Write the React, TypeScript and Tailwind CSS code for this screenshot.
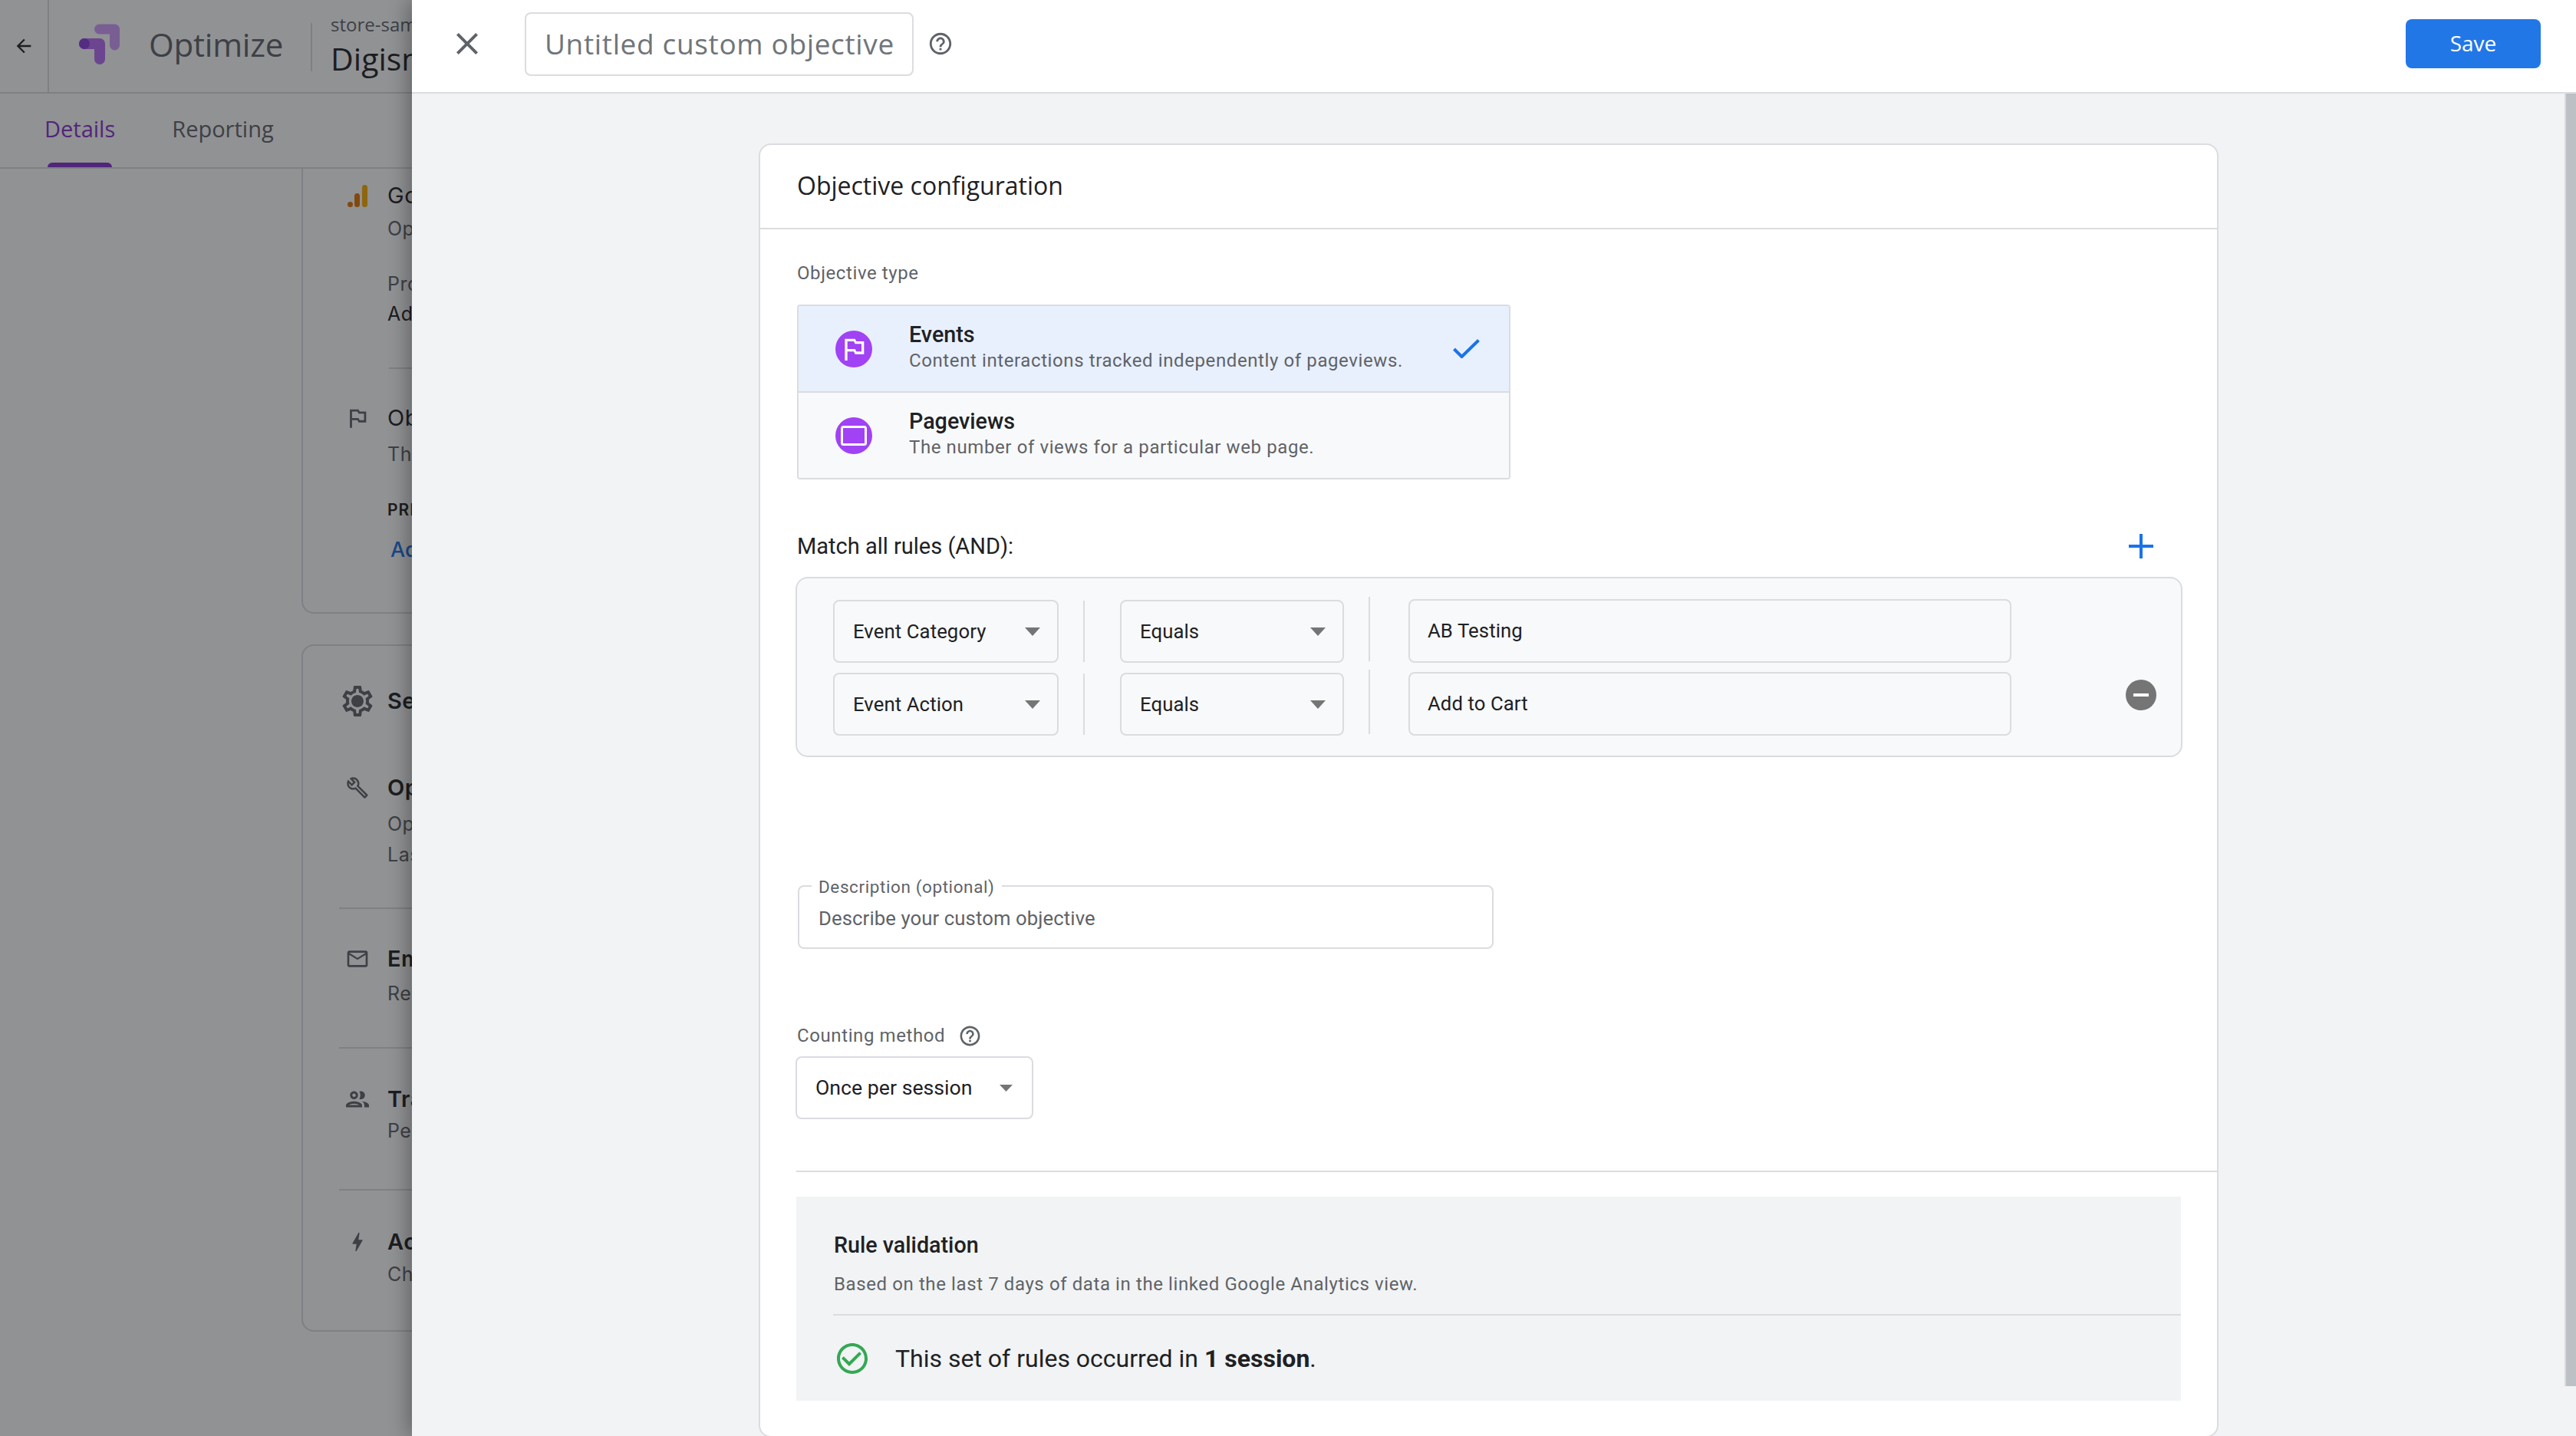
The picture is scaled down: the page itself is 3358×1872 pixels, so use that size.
import type { ReactNode } from "react";

const HEAD = "font-['Open_Sans',sans-serif]";

function Icon({ d, size, className }: { d: string; size: number; className?: string }) {
  return (
    <svg viewBox="0 0 24 24" width={size} height={size} className={`shrink-0 ${className ?? ""}`} fill="currentColor">
      <path d={d} />
    </svg>
  );
}

const HELP =
  "M11 18h2v-2h-2v2zm1-16C6.48 2 2 6.48 2 12s4.48 10 10 10 10-4.48 10-10S17.52 2 12 2zm0 18c-4.41 0-8-3.59-8-8s3.59-8 8-8 8 3.59 8 8-3.59 8-8 8zm0-14c-2.21 0-4 1.79-4 4h2c0-1.1.9-2 2-2s2 .9 2 2c0 2-3 1.75-3 5h2c0-2.25 3-2.5 3-5 0-2.21-1.79-4-4-4z";
const FLAG = "M14 6l-1-2H5v17h2v-7h5l1 2h7V6h-6zm4 8h-4l-1-2H7V6h5l1 2h5v6z";
const CLOSE =
  "M19 6.41L17.59 5 12 10.59 6.41 5 5 6.41 10.59 12 5 17.59 6.41 19 12 13.41 17.59 19 19 17.59 13.41 12z";
const CHECK_CIRCLE =
  "M16.59 7.58L10 14.17l-3.59-3.58L5 12l5 5 8-8zM12 2C6.48 2 2 6.48 2 12s4.48 10 10 10 10-4.48 10-10S17.52 2 12 2zm0 18c-4.42 0-8-3.58-8-8s3.58-8 8-8 8 3.58 8 8-3.58 8-8 8z";
const GEAR =
  "M19.43 12.98c.04-.32.07-.64.07-.98 0-.34-.03-.66-.07-.98l2.11-1.65c.19-.15.24-.42.12-.64l-2-3.46c-.09-.16-.26-.25-.44-.25-.06 0-.12.01-.17.03l-2.49 1c-.52-.4-1.08-.73-1.69-.98l-.38-2.65C14.46 2.18 14.25 2 14 2h-4c-.25 0-.46.18-.49.42l-.38 2.65c-.61.25-1.17.59-1.69.98l-2.49-1c-.06-.02-.12-.03-.18-.03-.17 0-.34.09-.43.25l-2 3.46c-.13.22-.07.49.12.64l2.11 1.65c-.04.32-.07.65-.07.98 0 .33.03.66.07.98l-2.11 1.65c-.19.15-.24.42-.12.64l2 3.46c.09.16.26.25.44.25.06 0 .12-.01.17-.03l2.49-1c.52.4 1.08.73 1.69.98l.38 2.65c.03.24.24.42.49.42h4c.25 0 .46-.18.49-.42l.38-2.65c.61-.25 1.17-.59 1.69-.98l2.49 1c.06.02.12.03.18.03.17 0 .34-.09.43-.25l2-3.46c.12-.22.07-.49-.12-.64l-2.11-1.65zm-1.98-1.71c.04.31.05.52.05.73 0 .21-.02.43-.05.73l-.14 1.13.89.7 1.08.84-.7 1.21-1.27-.51-1.04-.42-.9.68c-.43.32-.84.56-1.25.73l-1.06.43-.16 1.13-.2 1.35h-1.4l-.19-1.35-.16-1.13-1.06-.43c-.43-.18-.83-.41-1.23-.71l-.91-.7-1.06.43-1.27.51-.7-1.21 1.08-.84.89-.7-.14-1.13c-.03-.31-.05-.54-.05-.74s.02-.43.05-.73l.14-1.13-.89-.7-1.08-.84.7-1.21 1.27.51 1.04.42.9-.68c.43-.32.84-.56 1.25-.73l1.06-.43.16-1.13.2-1.35h1.39l.19 1.35.16 1.13 1.06.43c.43.18.83.41 1.23.71l.91.7 1.06-.43 1.27-.51.7 1.21-1.07.85-.89.7.14 1.13zM12 8c-2.21 0-4 1.79-4 4s1.79 4 4 4 4-1.79 4-4-1.79-4-4-4z";
const WRENCH =
  "M22.61 18.99l-9.08-9.08c.93-2.34.45-5.1-1.44-7C9.79.61 6.21.4 3.66 2.26L7.5 6.11 6.08 7.52 2.25 3.69C.39 6.23.6 9.82 2.9 12.11c1.86 1.86 4.57 2.35 6.88 1.48l9.11 9.11c.39.39 1.02.39 1.41 0l2.3-2.3c.4-.38.4-1.01.01-1.41zm-3 1.6l-9.46-9.46c-.61.45-1.29.72-2 .82-1.36.2-2.79-.21-3.83-1.25C3.37 9.76 2.93 8.5 3 7.26l3.09 3.09 4.24-4.24-3.09-3.09c1.24-.07 2.49.37 3.44 1.31 1.08 1.08 1.49 2.57 1.24 3.96-.12.71-.42 1.37-.88 1.96l9.45 9.45-.88.88z";
const MAIL =
  "M20 4H4c-1.1 0-1.99.9-1.99 2L2 18c0 1.1.9 2 2 2h16c1.1 0 2-.9 2-2V6c0-1.1-.9-2-2-2zm0 14H4V8l8 5 8-5v10zm-8-7L4 6h16l-8 5z";
const GROUP =
  "M9 13.75c-2.34 0-7 1.17-7 3.5V19h14v-1.75c0-2.33-4.66-3.5-7-3.5zM4.34 17c.84-.58 2.87-1.25 4.66-1.25s3.82.67 4.66 1.25H4.34zM9 12c1.93 0 3.5-1.57 3.5-3.5S10.93 5 9 5 5.5 6.57 5.5 8.5 7.07 12 9 12zm0-5c.83 0 1.5.67 1.5 1.5S9.83 10 9 10s-1.5-.67-1.5-1.5S8.17 7 9 7zm7.04 6.81c1.16.84 1.96 1.96 1.96 3.44V19h4v-1.75c0-2.02-3.5-3.17-5.96-3.44zM15 12c1.93 0 3.5-1.57 3.5-3.5S16.93 5 15 5c-.54 0-1.04.13-1.5.35.63.89 1 1.98 1 3.15s-.37 2.26-1 3.15c.46.22.96.35 1.5.35z";
const BOLT =
  "M11 21h-1l1-7H7.5c-.58 0-.57-.32-.38-.66.19-.34.05-.08.07-.12C8.48 10.94 10.42 7.54 13 3h1l-1 7h3.5c.49 0 .56.33.47.51l-.07.15C12.96 17.55 11 21 11 21z";
const BACK = "M20 11H7.83l5.59-5.59L12 4l-8 8 8 8 1.41-1.41L7.83 13H20v-2z";

function Caret({ className }: { className: string }) {
  return (
    <svg viewBox="0 0 10 6" preserveAspectRatio="none" className={`shrink-0 fill-[#757575] ${className}`}>
      <path d="M0 0h10L5 6z" />
    </svg>
  );
}

function Select({ label, width }: { label: string; width: string }) {
  return (
    <div className={`flex h-[82px] shrink-0 items-center justify-between rounded-[8px] border-2 border-[#dadce0] pl-[24px] pr-[22px] ${width}`}>
      <span className="text-[25.7px] tracking-[0.1px] text-[#202124]">{label}</span>
      <Caret className="h-[11px] w-[20px]" />
    </div>
  );
}

function RuleRow({ field, value, children }: { field: string; value: string; children?: ReactNode }) {
  return (
    <div className="flex h-[82px] items-center">
      <Select label={field} width="w-[294px]" />
      <div className="ml-[32px] h-[80px] w-[2px] shrink-0 bg-[#dadce0]" />
      <div className="ml-[46px]">
        <Select label="Equals" width="w-[292px]" />
      </div>
      <div className="-mb-[2px] -mt-[8px] ml-[32px] h-[84px] w-[2px] shrink-0 bg-[#dadce0]" />
      <div className="-mt-[2px] ml-[50px] flex h-[83px] w-[786px] shrink-0 items-center rounded-[8px] border-2 border-[#dadce0] pl-[23px] text-[25.7px] tracking-[0.1px] text-[#202124]">
        {value}
      </div>
      {children}
    </div>
  );
}

function TypeOption({ title, text, selected, icon }: { title: string; text: string; selected?: boolean; icon: ReactNode }) {
  return (
    <div className={`flex h-[111px] items-center pl-[48px] pr-[38px] ${selected ? "bg-[#e8f0fe]" : "bg-[#f8f9fa]"}`}>
      <div className="flex h-[48px] w-[48px] shrink-0 items-center justify-center rounded-full bg-[#a142f4] text-white">{icon}</div>
      <div className="mb-[5px] ml-[48px] flex-1">
        <div className="text-[28.7px] leading-[36px] font-medium text-[#202124]">{title}</div>
        <div className="text-[24px] leading-[32px] tracking-[0.6px] text-[#5f6368]">{text}</div>
      </div>
      {selected && (
        <svg viewBox="0 0 35 25" className="h-[25px] w-[35px] shrink-0 fill-none stroke-[#1a73e8] stroke-[4px]">
          <path d="M1.5 13 L11.5 23 L33.5 1.5" />
        </svg>
      )}
    </div>
  );
}

function Setting({ icon, title, lines, className, strong }: { icon: ReactNode; title: string; lines: [string, string][]; className: string; strong?: boolean }) {
  return (
    <div className={`flex ${className}`}>
      <div className="flex h-[40px] w-[110px] shrink-0 pl-[49px]">
        <div className="flex h-[40px] w-[44px] items-center justify-center text-[#5f6368]">{icon}</div>
      </div>
      <div>
        <div className={`font-['Inter',sans-serif] text-[29px] leading-[40px] tracking-[0.5px] text-[#202124] ${strong ? "font-semibold" : ""}`}>{title}</div>
        {lines.map(([t, c]) => (
          <div key={t} className={`font-['Inter',sans-serif] text-[25px] leading-[40px] tracking-[0.5px] text-[#5f6368] ${c}`}>
            {t}
          </div>
        ))}
      </div>
    </div>
  );
}

function Background() {
  return (
    <div className="flex h-full flex-col bg-white">
      <header className="flex h-[122px] shrink-0 border-b-2 border-[#dadce0]">
        <div className="flex h-full w-[64px] shrink-0 items-center justify-center border-r-2 border-[#dadce0] text-[#202124]">
          <Icon d={BACK} size={28} />
        </div>
        <svg viewBox="0 0 80 75" className="ml-[26px] mt-[20px] h-[75px] w-[80px] shrink-0 fill-none" strokeLinecap="round" strokeLinejoin="round">
          <path d="M39.5 18H59.5V39" stroke="#d19bff" strokeWidth="13" />
          <path d="M20 37H40V57" stroke="#b86cf8" strokeWidth="14" />
          <circle cx="20" cy="37" r="7" fill="#8a3ddb" />
        </svg>
        <div className={`${HEAD} mb-[6px] ml-[24px] self-center text-[42px] font-medium tracking-[-0.2px] text-[#5f6368]`}>Optimize</div>
        <div className="ml-[36px] mt-[30px] h-[63px] w-[2px] shrink-0 bg-[#dadce0]" />
        <div className={`${HEAD} ml-[24px] mt-[14px] whitespace-nowrap`}>
          <div className="text-[24px] leading-[36px] text-[#5f6368]">store-sample</div>
          <div className="text-[41px] leading-[52px] text-[#202124]">Digismoothie</div>
        </div>
      </header>
      <nav className="flex h-[98px] shrink-0 gap-[74px] border-b-2 border-[#dadce0] pl-[58px]">
        <div className="flex flex-col pt-[26px]">
          <span className={`${HEAD} text-[29px] leading-[40px] font-medium text-[#8430ce]`}>Details</span>
          <div className="mx-[4px] mt-auto h-[6px] rounded-t-[6px] bg-[#8430ce]" />
        </div>
        <div className="pt-[26px]">
          <span className={`${HEAD} text-[29px] leading-[40px] font-medium text-[#5f6368]`}>Reporting</span>
        </div>
      </nav>
      <main className="flex-1 overflow-hidden pl-[393px]">
        <section className="h-[580px] w-[900px] rounded-b-[16px] border-x-2 border-b-2 border-[#dadce0] pt-[15px]">
          <Setting
            className=""
            icon={
              <svg viewBox="0 0 26 29" className="h-[29px] w-[26px]">
                <rect x="19" width="7" height="29" rx="3.5" fill="#f9ab00" />
                <rect x="9" y="11" width="7" height="18" rx="3.5" fill="#e37400" />
                <circle cx="3.5" cy="25.5" r="3.5" fill="#e37400" />
              </svg>
            }
            title="Google Analytics"
            lines={[
              ["Optimize", "mt-[3px]"],
              ["Property", "mt-[32px]"],
            ]}
          />
          <div className="ml-[110px] -mt-[1px] font-['Inter',sans-serif] text-[25px] leading-[40px] tracking-[0.5px] text-[#202124]">Add</div>
          <div className="ml-[112px] mt-[50px] h-[2px] bg-[#dadce0]" />
          <Setting className="mt-[44px]" icon={<Icon d={FLAG} size={34} />} title="Objectives" lines={[["The", "mt-[7px]"]]} />
          <div className="ml-[110px] mt-[33px] font-['Inter',sans-serif] text-[21px] leading-[40px] font-semibold tracking-[1px] text-[#202124]">PRIMARY</div>
          <div className="ml-[114px] mt-[12px] font-['Inter',sans-serif] text-[27px] leading-[40px] font-medium text-[#1a73e8]">Add</div>
        </section>
        <section className="mt-[40px] h-[896px] w-[900px] rounded-[16px] border-2 border-[#dadce0] pt-[52px]">
          <Setting className="" strong icon={<Icon d={GEAR} size={48} />} title="Settings" lines={[]} />
          <Setting
            className="mt-[73px]"
            strong
            icon={<Icon d={WRENCH} size={30} />}
            title="Optimize"
            lines={[
              ["Options", "mt-[7px]"],
              ["Last", ""],
            ]}
          />
          <div className="ml-[47px] mt-[49px] h-[2px] bg-[#dadce0]" />
          <Setting className="mt-[45px]" strong icon={<Icon d={MAIL} size={32} />} title="Email" lines={[["Receive", "mt-[5px]"]]} />
          <div className="ml-[47px] mt-[50px] h-[2px] bg-[#dadce0]" />
          <Setting className="mt-[46px]" strong icon={<Icon d={GROUP} size={36} />} title="Traffic" lines={[["Percent", "mt-[1px]"]]} />
          <div className="ml-[47px] mt-[56px] h-[2px] bg-[#dadce0]" />
          <Setting className="mt-[47px]" strong icon={<Icon d={BOLT} size={32} />} title="Activation" lines={[["Change", "mt-[2px]"]]} />
        </section>
      </main>
    </div>
  );
}

export default function App() {
  return (
    <div className="relative h-screen w-full overflow-hidden font-['Roboto',sans-serif]">
      <Background />
      <div className="absolute inset-0 bg-[#1a1c20]/48" />

      <div className="absolute inset-y-0 left-[537px] right-0 flex flex-col bg-[#f1f3f4] shadow-[-6px_0_24px_rgba(0,0,0,0.3)]">
        <header className="flex h-[122px] shrink-0 items-center border-b-2 border-[#dadce0] bg-white pb-[6px] pl-[48px] pr-[46px]">
          <Icon d={CLOSE} size={48} className="text-[#5f6368]" />
          <div className={`${HEAD} ml-[51px] flex h-[83px] w-[507px] shrink-0 items-center rounded-[8px] border-2 border-[#dadce0] pl-[24px] text-[37px] font-medium tracking-[0.65px] text-[#70757a]`}>
            Untitled custom objective
          </div>
          <Icon d={HELP} size={34} className="ml-[18px] text-[#5f6368]" />
          <button className={`${HEAD} ml-auto h-[64px] w-[176px] rounded-[8px] bg-[#2277e7] pb-[2px] text-[28px] font-medium text-white`}>Save</button>
        </header>

        <div className="flex min-h-0 flex-1 overflow-hidden">
          <div className="flex-1 pl-[452px]">
            <section className="mt-[65px] w-[1903px] rounded-[16px] border-2 border-[#dadce0] bg-white pb-[46px]">
              <div className="flex h-[110px] items-center border-b-2 border-[#dadce0] pb-[2px] pl-[48px]">
                <h2 className={`${HEAD} text-[32px] text-[#202124]`}>Objective configuration</h2>
              </div>

              <div className="pl-[48px] pr-[47px]">
                <div className="mt-[39px] text-[24px] leading-[36px] tracking-[0.6px] text-[#5f6368]">Objective type</div>
                <div className="mt-[23px] w-[930px] overflow-hidden rounded-[4px] border-2 border-[#dadce0]">
                  <TypeOption
                    selected
                    title="Events"
                    text="Content interactions tracked independently of pageviews."
                    icon={<Icon d={FLAG} size={40} />}
                  />
                  <div className="h-[2px] bg-[#dadce0]" />
                  <TypeOption
                    title="Pageviews"
                    text="The number of views for a particular web page."
                    icon={
                      <svg viewBox="0 0 34 26" className="h-[26px] w-[34px] fill-none stroke-white stroke-[3px]">
                        <rect x="1.5" y="1.5" width="31" height="23" rx="2" />
                      </svg>
                    }
                  />
                </div>

                <div className="mt-[69px] flex h-[36px] items-center justify-between pr-[36px]">
                  <div className="text-[29px] leading-[36px] text-[#202124]">Match all rules (AND):</div>
                  <svg viewBox="0 0 32 32" className="h-[32px] w-[32px] fill-[#1a73e8]">
                    <path d="M14 0h4v14h14v4H18v14h-4V18H0v-4h14z" />
                  </svg>
                </div>

                <div className="-ml-[2px] -mr-[2px] mt-[22px] flex h-[235px] flex-col gap-[13px] rounded-[16px] border-2 border-[#dadce0] bg-[#f8f9fa] pl-[47px] pt-[28px]">
                  <RuleRow field="Event Category" value="AB Testing" />
                  <RuleRow field="Event Action" value="Add to Cart">
                    <div className="mb-[24px] ml-[149px] flex h-[40px] w-[40px] shrink-0 items-center justify-center rounded-full bg-[#757575]">
                      <div className="h-[4px] w-[20px] bg-white" />
                    </div>
                  </RuleRow>
                </div>

                <div className="relative ml-[1px] mt-[167px] flex h-[83px] w-[907px] items-center rounded-[8px] border-2 border-[#dadce0] pl-[25px] pt-[3px] text-[25.7px] tracking-[0.1px] text-[#5f6368]">
                  Describe your custom objective
                  <span className="absolute -top-[16px] left-[16px] bg-white px-[9px] text-[22.5px] leading-[32px] tracking-[0.6px] text-[#5f6368]">Description (optional)</span>
                </div>

                <div className="mt-[95px] flex h-[36px] items-center text-[24px] tracking-[0.6px] text-[#5f6368]">
                  Counting method
                  <Icon d={HELP} size={31} className="ml-[17px]" />
                </div>

                <div className="-ml-[2px] mt-[9px] flex h-[82px] w-[310px] items-center justify-between rounded-[8px] border-2 border-[#dadce0] pl-[24px] pr-[25px]">
                  <span className="text-[26.7px] text-[#202124]">Once per session</span>
                  <Caret className="h-[9px] w-[17px]" />
                </div>

                <div className="-ml-[1px] -mr-[47px] mt-[67px] h-[2px] bg-[#dadce0]" />

                <div className="-ml-[1px] mt-[32px] h-[266px] bg-[#f1f3f4] pl-[49px] pt-[45px]">
                  <div className="text-[28.7px] leading-[36px] font-medium text-[#202124]">Rule validation</div>
                  <div className="mt-[17px] text-[24px] leading-[32px] tracking-[0.6px] text-[#5f6368]">Based on the last 7 days of data in the linked Google Analytics view.</div>
                  <div className="-ml-[1px] mt-[23px] h-[2px] bg-[#dadce0]" />
                  <div className="flex h-[111px] items-center">
                    <Icon d={CHECK_CIRCLE} size={48} className="text-[#34a853]" />
                    <div className="ml-[32px] text-[32px] text-[#202124]">
                      This set of rules occurred in <b className="font-bold">1 session</b>.
                    </div>
                  </div>
                </div>
              </div>
            </section>
          </div>
          <div className="w-[15px] shrink-0">
            <div className="h-[1685px] border-l-2 border-[#dadce0] bg-[#bdc1c6]" />
          </div>
        </div>
      </div>
    </div>
  );
}
